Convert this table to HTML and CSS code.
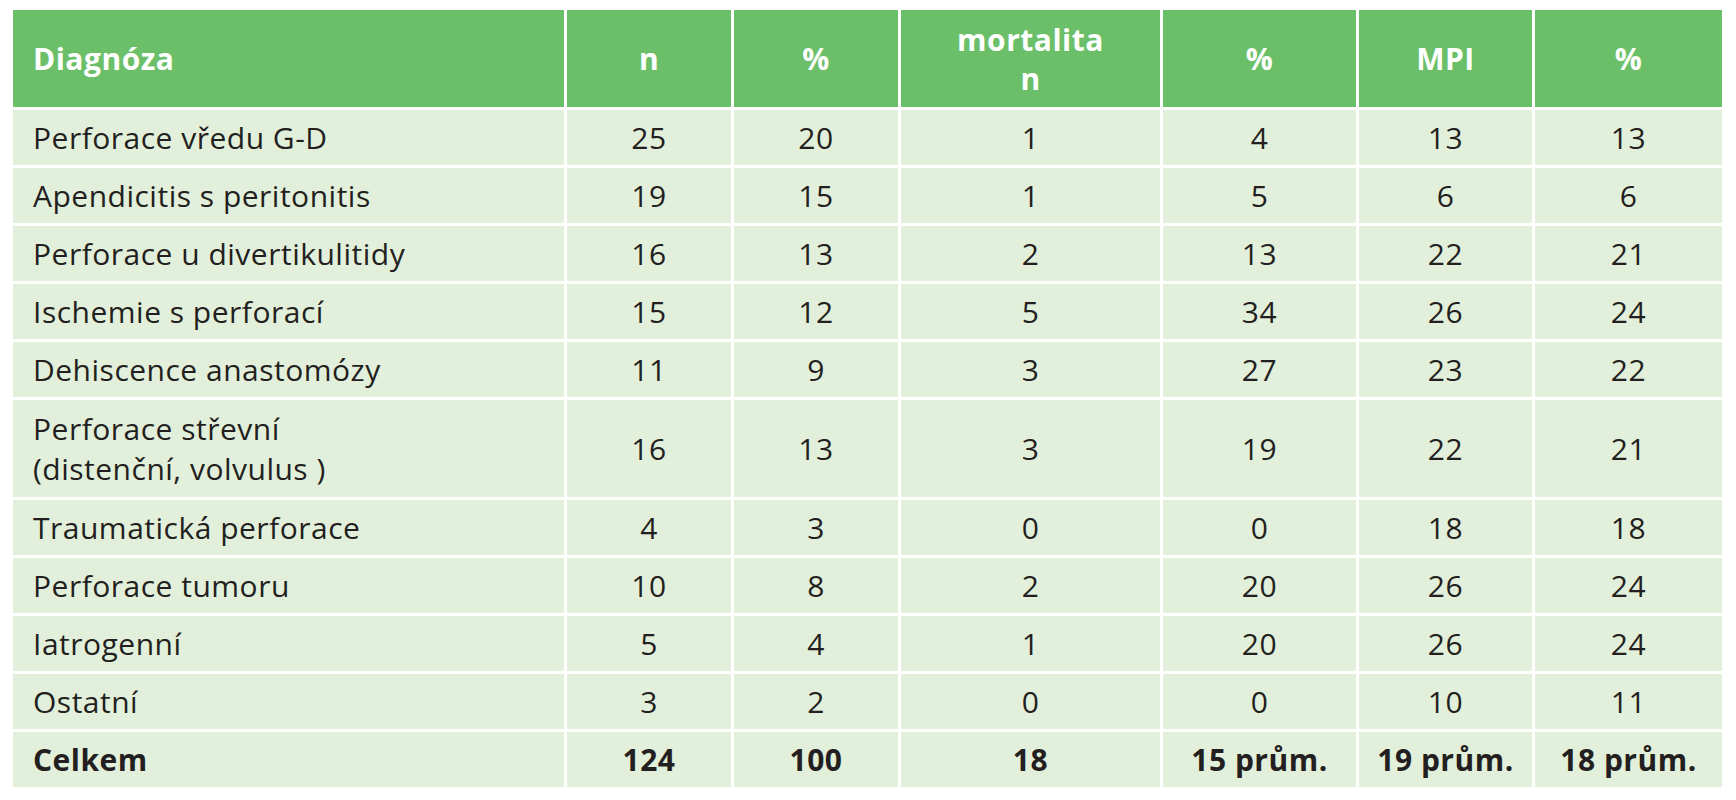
FILE: index.html
```html
<!DOCTYPE html>
<html lang="cs">
<head>
<meta charset="utf-8">
<title>Tabulka</title>
<link rel="stylesheet" href="styles.css">
</head>
<body>
<table class="data">
  <colgroup>
    <col class="c-diag"><col class="c-n"><col class="c-p1"><col class="c-mort"><col class="c-p2"><col class="c-mpi"><col class="c-p3">
  </colgroup>
  <thead>
    <tr class="head">
      <th class="left">Diagnóza</th>
      <th>n</th>
      <th>%</th>
      <th class="two">mortalita<br>n</th>
      <th>%</th>
      <th>MPI</th>
      <th>%</th>
    </tr>
  </thead>
  <tbody>
    <tr><td class="left">Perforace vředu G-D</td><td>25</td><td>20</td><td>1</td><td>4</td><td>13</td><td>13</td></tr>
    <tr><td class="left">Apendicitis s peritonitis</td><td>19</td><td>15</td><td>1</td><td>5</td><td>6</td><td>6</td></tr>
    <tr><td class="left">Perforace u divertikulitidy</td><td>16</td><td>13</td><td>2</td><td>13</td><td>22</td><td>21</td></tr>
    <tr><td class="left">Ischemie s perforací</td><td>15</td><td>12</td><td>5</td><td>34</td><td>26</td><td>24</td></tr>
    <tr><td class="left">Dehiscence anastomózy</td><td>11</td><td>9</td><td>3</td><td>27</td><td>23</td><td>22</td></tr>
    <tr class="tall"><td class="left">Perforace střevní<br>(distenční, volvulus )</td><td>16</td><td>13</td><td>3</td><td>19</td><td>22</td><td>21</td></tr>
    <tr><td class="left">Traumatická perforace</td><td>4</td><td>3</td><td>0</td><td>0</td><td>18</td><td>18</td></tr>
    <tr><td class="left">Perforace tumoru</td><td>10</td><td>8</td><td>2</td><td>20</td><td>26</td><td>24</td></tr>
    <tr><td class="left">Iatrogenní</td><td>5</td><td>4</td><td>1</td><td>20</td><td>26</td><td>24</td></tr>
    <tr><td class="left">Ostatní</td><td>3</td><td>2</td><td>0</td><td>0</td><td>10</td><td>11</td></tr>
    <tr class="total"><td class="left">Celkem</td><td>124</td><td>100</td><td>18</td><td>15 prům.</td><td>19 prům.</td><td>18 prům.</td></tr>
  </tbody>
</table>
</body>
</html>
```

FILE: styles.css
```css
html, body {
  margin: 0;
  padding: 0;
  background: #ffffff;
}

body {
  padding: 7px 0 0 10px;
  font-family: "Open Sans", "Noto Sans", "Liberation Sans", sans-serif;
  color: #231f20;
}

.data {
  border-collapse: collapse;
  table-layout: fixed;
  width: 1712px;
  font-size: 30px;
  letter-spacing: 0.5px;
}

.c-diag { width: 554px; }
.c-n { width: 167px; }
.c-p1 { width: 167px; }
.c-mort { width: 262px; }
.c-p2 { width: 196px; }
.c-mpi { width: 176px; }
.c-p3 { width: 190px; }

.data th,
.data td {
  border: 3px solid #ffffff;
  text-align: center;
  vertical-align: middle;
  padding: 0 4px;
  white-space: nowrap;
}

.data th {
  background: #6bbf69;
  color: #ffffff;
  font-weight: 700;
  line-height: 39px;
}

.data td {
  background: #e2efda;
  line-height: 40px;
}

.data .left {
  text-align: left;
  padding-left: 20px;
}

.head { height: 100px; }
.data tbody tr { height: 58px; }
.data tbody tr.tall { height: 100px; }
.total td { font-weight: 700; }
```
